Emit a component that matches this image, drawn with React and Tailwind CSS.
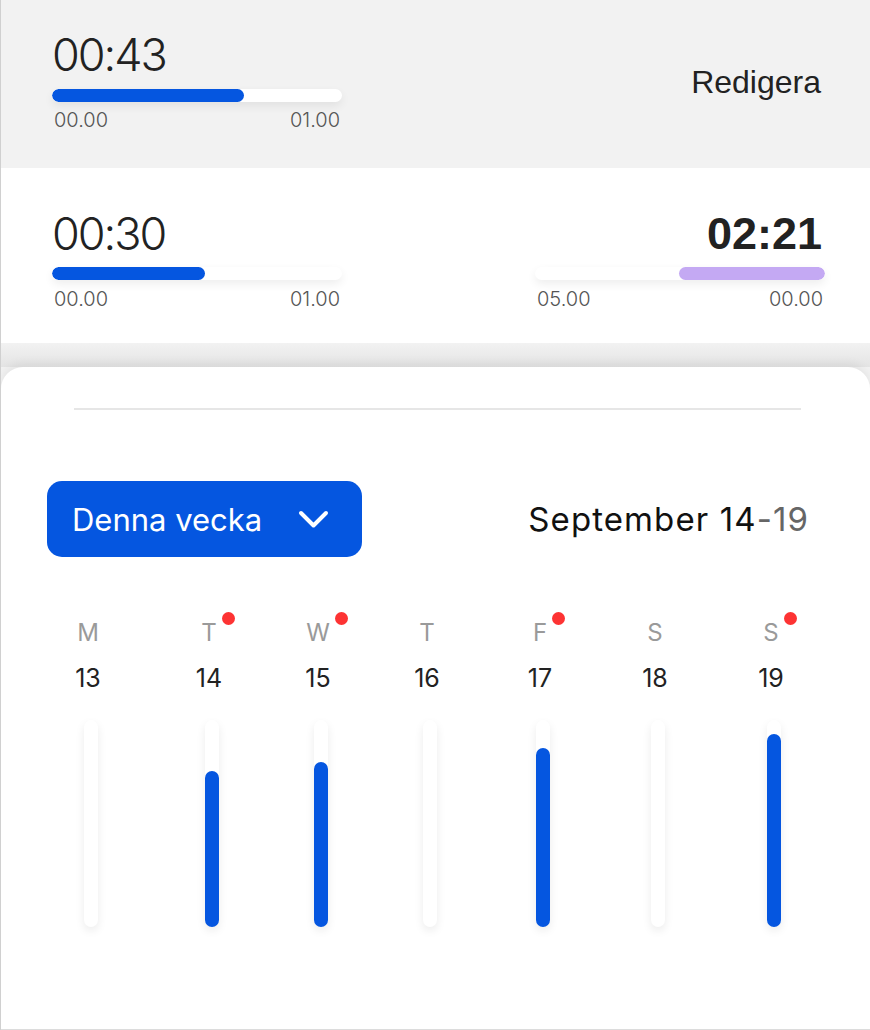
import React from 'react';

const inter = { fontFamily: 'Inter, "Noto Sans", sans-serif' };
const helv = { fontFamily: '"Liberation Sans", Arial, sans-serif' };

const days = [
  { l: 'M', n: 13, fill: 0, dot: false },
  { l: 'T', n: 14, fill: 156, dot: true },
  { l: 'W', n: 15, fill: 165, dot: true },
  { l: 'T', n: 16, fill: 0, dot: false },
  { l: 'F', n: 17, fill: 179, dot: true },
  { l: 'S', n: 18, fill: 0, dot: false },
  { l: 'S', n: 19, fill: 193, dot: true },
];

// Time with a small progress track and two labels beneath
const Timer = ({ time, fill, left, right, bold, reverse, className }) => (
  <div className={'flex w-[290px] flex-col ' + (className || '')}>
    <div
      className={
        bold
          ? 'pr-[3px] text-right text-[45px] font-bold leading-none text-[#222]'
          : 'text-[45px] font-light leading-none tracking-[-2px] text-[#222]'
      }
      style={bold ? helv : inter}
    >
      {time}
    </div>
    <div
      className={
        'mt-[11px] flex h-[13px] w-full overflow-hidden rounded-full bg-white shadow-[0_4px_10px_rgba(0,0,0,0.07)] ' +
        (reverse ? 'justify-end' : '')
      }
    >
      <div
        className={reverse ? 'h-full rounded-full bg-[#c4a9f3]' : 'h-full rounded-full bg-[#0556e0]'}
        style={{ width: fill }}
      />
    </div>
    <div className="mt-[9px] flex justify-between px-[2px] text-[20px] font-light leading-none text-[#555]" style={inter}>
      <span>{left}</span>
      <span>{right}</span>
    </div>
  </div>
);

export default function App() {
  return (
    <div className="h-[1030px] w-[870px] overflow-hidden border-l border-[#d0d0d0] bg-[#f2f2f2]">
      {/* Top row */}
      <div className="flex h-[168px] items-start justify-between bg-[#f2f2f2] pl-[51px] pr-[49px] pt-[32px]">
        <Timer time="00:43" fill={192} left="00.00" right="01.00" className="[&>div:nth-child(2)]:mt-[12px] [&>div:nth-child(3)]:mt-[8px]" />
        <div className="mt-[34px] text-[32px] leading-none text-[#222]" style={helv}>
          Redigera
        </div>
      </div>

      {/* Second row */}
      <div className="flex h-[175px] items-start justify-between bg-white pl-[51px] pr-[45px] pt-[43px]">
        <Timer time="00:30" fill={153} left="00.00" right="01.00" />
        <Timer time="02:21" fill={146} left="05.00" right="00.00" bold reverse />
      </div>

      <div className="h-[24px] bg-gradient-to-b from-[#f2f2f2] to-[#e4e4e4]" />

      {/* Week card */}
      <div className="h-[663px] rounded-t-[22px] border-b border-[#dcdcdc] bg-white pt-[41px] shadow-[0_-4px_10px_rgba(0,0,0,0.06)]">
        <div className="ml-[73px] mr-[69px] h-[2px] bg-[#e6e6e6]" />

        <div className="mt-[71px] flex items-center justify-between pl-[46px] pr-[61px]">
          <button className="flex h-[76px] w-[315px] items-center justify-between rounded-[15px] bg-[#0556e0] pl-[25px] pr-[33px] text-white">
            <span className="text-[31px] leading-none" style={inter}>
              Denna vecka
            </span>
            <svg width="31" height="19" viewBox="0 0 31 19" fill="none">
              <polyline
                points="3,3 15.5,15.5 28,3"
                stroke="white"
                strokeWidth="4"
                strokeLinecap="round"
                strokeLinejoin="round"
              />
            </svg>
          </button>
          <div className="text-[33px] leading-none tracking-[1.1px] text-[#111]" style={inter}>
            September 14<span className="text-[#666]">-19</span>
          </div>
        </div>

        <div className="mt-[64px] ml-[29px] grid grid-cols-[116px_126px_92px_126px_100px_130px_102px]">
          {days.map((d, i) => (
            <div key={i} className="flex flex-col items-center">
              <div className="relative text-[24px] leading-none text-[#9a9a9a]" style={inter}>
                {d.l}
                {d.dot && (
                  <span className="absolute left-[calc(100%+5px)] top-[-9px] h-[13px] w-[13px] rounded-full bg-[#fd3333]" />
                )}
              </div>
              <div className="mt-[21px] text-[25px] leading-none text-[#222]" style={inter}>
                {d.n}
              </div>
              <div className="ml-[6px] mt-[29px] flex h-[207px] w-[14px] flex-col justify-end rounded-full bg-white shadow-[0_4px_10px_rgba(0,0,0,0.08)]">
                {d.fill > 0 && <div className="w-full rounded-full bg-[#0556e0]" style={{ height: d.fill }} />}
              </div>
            </div>
          ))}
        </div>
      </div>
    </div>
  );
}
